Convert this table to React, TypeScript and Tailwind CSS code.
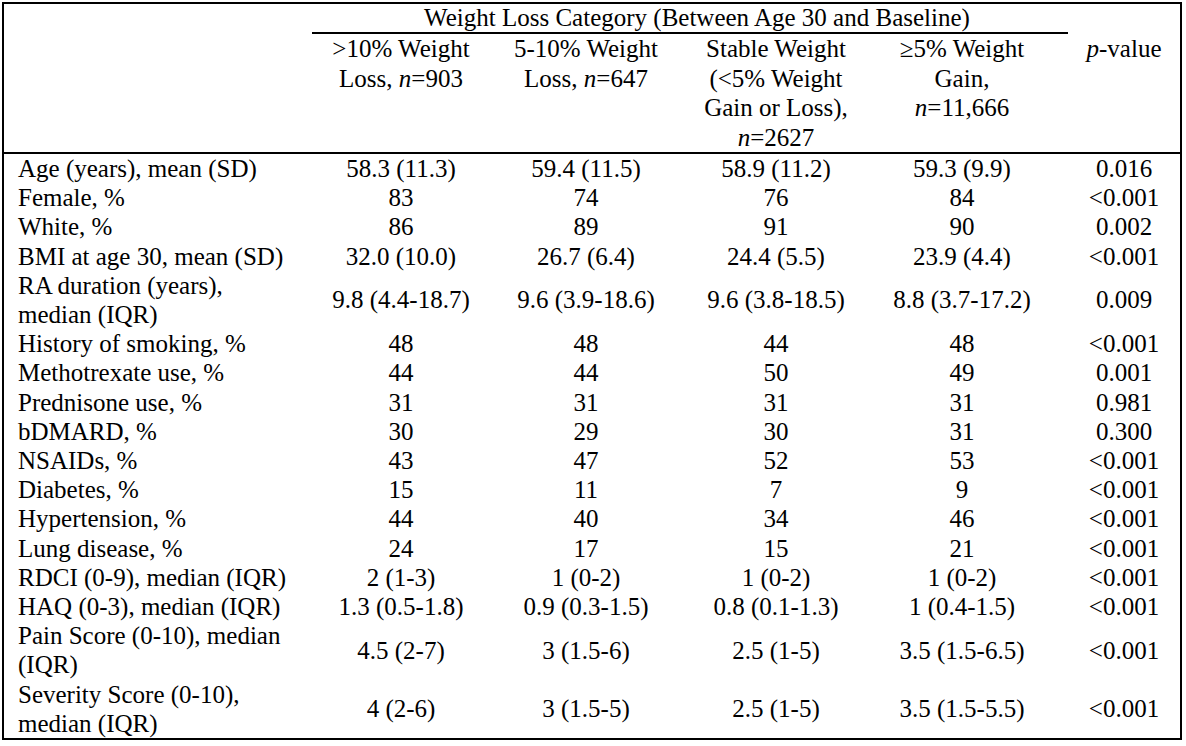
import React from "react";

type Row = { label: React.ReactNode; cells: string[]; p: string };

const rows: Row[] = [
  { label: "Age (years), mean (SD)", cells: ["58.3 (11.3)", "59.4 (11.5)", "58.9 (11.2)", "59.3 (9.9)"], p: "0.016" },
  { label: "Female, %", cells: ["83", "74", "76", "84"], p: "<0.001" },
  { label: "White, %", cells: ["86", "89", "91", "90"], p: "0.002" },
  { label: "BMI at age 30, mean (SD)", cells: ["32.0 (10.0)", "26.7 (6.4)", "24.4 (5.5)", "23.9 (4.4)"], p: "<0.001" },
  {
    label: (
      <>
        RA duration (years),
        <br />
        median (IQR)
      </>
    ),
    cells: ["9.8 (4.4-18.7)", "9.6 (3.9-18.6)", "9.6 (3.8-18.5)", "8.8 (3.7-17.2)"],
    p: "0.009",
  },
  { label: "History of smoking, %", cells: ["48", "48", "44", "48"], p: "<0.001" },
  { label: "Methotrexate use, %", cells: ["44", "44", "50", "49"], p: "0.001" },
  { label: "Prednisone use, %", cells: ["31", "31", "31", "31"], p: "0.981" },
  { label: "bDMARD, %", cells: ["30", "29", "30", "31"], p: "0.300" },
  { label: "NSAIDs, %", cells: ["43", "47", "52", "53"], p: "<0.001" },
  { label: "Diabetes, %", cells: ["15", "11", "7", "9"], p: "<0.001" },
  { label: "Hypertension, %", cells: ["44", "40", "34", "46"], p: "<0.001" },
  { label: "Lung disease, %", cells: ["24", "17", "15", "21"], p: "<0.001" },
  { label: "RDCI (0-9), median (IQR)", cells: ["2 (1-3)", "1 (0-2)", "1 (0-2)", "1 (0-2)"], p: "<0.001" },
  { label: "HAQ (0-3), median (IQR)", cells: ["1.3 (0.5-1.8)", "0.9 (0.3-1.5)", "0.8 (0.1-1.3)", "1 (0.4-1.5)"], p: "<0.001" },
  {
    label: (
      <>
        Pain Score (0-10), median
        <br />
        (IQR)
      </>
    ),
    cells: ["4.5 (2-7)", "3 (1.5-6)", "2.5 (1-5)", "3.5 (1.5-6.5)"],
    p: "<0.001",
  },
  {
    label: (
      <>
        Severity Score (0-10),
        <br />
        median (IQR)
      </>
    ),
    cells: ["4 (2-6)", "3 (1.5-5)", "2.5 (1-5)", "3.5 (1.5-5.5)"],
    p: "<0.001",
  },
];

const grid = "grid grid-cols-[322px_150px_220px_160px_212px_112px]";

export default function App() {
  return (
    <div
      className="bg-white text-black p-[2px] w-[1186px] h-[746px]"
      style={{ fontFamily: '"Liberation Serif", "Times New Roman", serif' }}
    >
      <div className="w-[1180px] h-[738px] border-2 border-black text-[25px] whitespace-nowrap">
        {/* Header */}
        <div className={`${grid} border-b-2 border-black`}>
          <div className="row-span-2" />
          <div className="col-span-4 -ml-[14px] pl-[14px] border-b-2 border-black text-center leading-[28px] h-[30px]">
            Weight Loss Category (Between Age 30 and Baseline)
          </div>
          <div />
          <div className="text-center leading-[29.5px] h-[118px]">
            &gt;10% Weight
            <br />
            Loss, <i>n</i>=903
          </div>
          <div className="text-center leading-[29.5px]">
            5-10% Weight
            <br />
            Loss, <i>n</i>=647
          </div>
          <div className="text-center leading-[29.5px]">
            Stable Weight
            <br />
            (&lt;5% Weight
            <br />
            Gain or Loss),
            <br />
            <i>n</i>=2627
          </div>
          <div className="text-center leading-[29.5px]">
            ≥5% Weight
            <br />
            Gain,
            <br />
            <i>n</i>=11,666
          </div>
          <div className="text-center leading-[29.5px]">
            <i>p</i>-value
          </div>
        </div>
        {/* Body */}
        <div className="leading-[29.2px]">
          {rows.map((r, i) => (
            <div key={i} className={grid}>
              <div className="pl-[14px]">{r.label}</div>
              {r.cells.map((c, j) => (
                <div key={j} className="flex items-center justify-center">
                  {c}
                </div>
              ))}
              <div className="flex items-center justify-center">{r.p}</div>
            </div>
          ))}
        </div>
      </div>
    </div>
  );
}
